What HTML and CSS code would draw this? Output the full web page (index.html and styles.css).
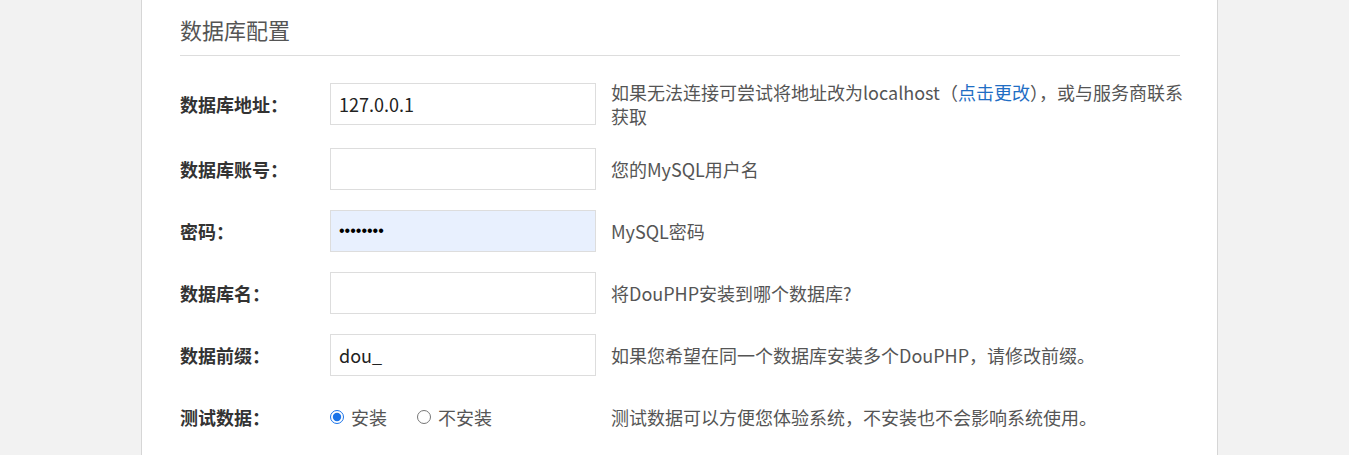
FILE: index.html
```html
<!DOCTYPE html>
<html lang="zh-CN">
<head>
  <meta charset="UTF-8" />
  <title>DouPHP 安装 - 数据库配置</title>
  <meta name="viewport" content="width=device-width, initial-scale=1.0" />
  <link rel="stylesheet" href="styles.css">
</head>
<body>
  <div class="wrap">
    <h2 class="title">数据库配置</h2>

    <form class="form" action="#">
      <label class="label" for="dbhost">数据库地址：</label>
      <input class="field" type="text" id="dbhost" value="127.0.0.1" />
      <div class="tip">如果无法连接可尝试将地址改为localhost（<a href="#" class="link">点击更改</a>），或与服务商联系获取</div>

      <label class="label" for="dbuser">数据库账号：</label>
      <input class="field" type="text" id="dbuser" value="" />
      <div class="tip">您的MySQL用户名</div>

      <label class="label" for="dbpass">密码：</label>
      <input class="field autofill" type="password" id="dbpass" value="12345678" />
      <div class="tip">MySQL密码</div>

      <label class="label" for="dbname">数据库名：</label>
      <input class="field" type="text" id="dbname" value="" />
      <div class="tip">将DouPHP安装到哪个数据库?</div>

      <label class="label" for="prefix">数据前缀：</label>
      <input class="field" type="text" id="prefix" value="dou_" />
      <div class="tip">如果您希望在同一个数据库安装多个DouPHP，请修改前缀。</div>

      <span class="label">测试数据：</span>
      <div class="radios">
        <label class="radio"><input type="radio" name="demo" value="1" checked /> 安装</label>
        <label class="radio"><input type="radio" name="demo" value="0" /> 不安装</label>
      </div>
      <div class="tip">测试数据可以方便您体验系统，不安装也不会影响系统使用。</div>
    </form>
  </div>
</body>
</html>
```
FILE: styles.css
```css
* {
  box-sizing: border-box;
}

body {
  margin: 0;
  background: #f2f2f2;
  font-family: "Noto Sans CJK SC", "Liberation Sans", sans-serif;
  color: #555;
  height: 455px;
  overflow: hidden;
}

.wrap {
  width: 1077px;
  min-height: 100%;
  margin-left: 141px;
  background: #fff;
  border-left: 1px solid #d6d6d6;
  border-right: 1px solid #d6d6d6;
  padding: 0 37px 0 38px;
}

.title {
  margin: 0;
  padding: 14px 0 10px;
  font-size: 22px;
  line-height: 31px;
  font-weight: normal;
  color: #555;
  border-bottom: 1px solid #ddd;
}

.form {
  display: grid;
  grid-template-columns: 150px 281px 1fr;
  row-gap: 20px;
  align-items: center;
  padding-top: 24px;
}

.label {
  font-size: 18px;
  font-weight: bold;
  color: #333;
}

.field {
  width: 266px;
  height: 42px;
  border: 1px solid #ddd;
  padding: 0 8px;
  font-size: 18px;
  font-family: "Noto Sans CJK SC", "Liberation Sans", sans-serif;
  color: #222;
  background: #fff;
  outline: none;
}

.field.autofill {
  background: #e8f0fe;
  font-family: "Liberation Sans", sans-serif;
  font-size: 16px;
  color: #000;
}

.tip {
  font-size: 18px;
  line-height: 24px;
  color: #555;
  margin-right: -12px;
}

.link {
  color: #1f6ec4;
  text-decoration: none;
}

.radios {
  display: flex;
  align-items: center;
  gap: 30px;
  height: 42px;
}

.radio {
  display: flex;
  align-items: center;
  gap: 7px;
  font-size: 18px;
  color: #555;
}

.radio input {
  margin: 0;
  width: 14px;
  height: 14px;
  accent-color: #1a73e8;
}
```
